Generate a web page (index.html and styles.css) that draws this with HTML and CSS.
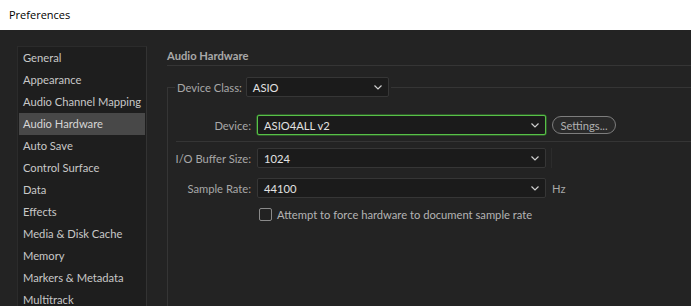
FILE: index.html
```html
<!DOCTYPE html>
<html>
<head>
<meta charset="utf-8">
<link rel="stylesheet" href="styles.css">
</head>
<body>
<div class="titlebar">Preferences</div>
<div class="main">
  <ul class="nav">
    <li>General</li>
    <li>Appearance</li>
    <li>Audio Channel Mapping</li>
    <li class="active">Audio Hardware</li>
    <li>Auto Save</li>
    <li>Control Surface</li>
    <li>Data</li>
    <li>Effects</li>
    <li>Media &amp; Disk Cache</li>
    <li>Memory</li>
    <li>Markers &amp; Metadata</li>
    <li>Multitrack</li>
  </ul>
  <section class="content">
    <h2 class="heading">Audio Hardware</h2>
    <fieldset class="group">
      <legend class="legend">
        <span class="legend-label">Device Class:</span>
        <div class="select select-class"><span>ASIO</span><svg class="chev" width="8" height="5" viewBox="0 0 8 5"><polyline points="0.5,0.5 4,4 7.5,0.5" fill="none" stroke="#cfcfcf" stroke-width="1.2"/></svg></div>
      </legend>
      <div class="row row-device">
        <span class="label">Device:</span>
        <div class="select focused"><span>ASIO4ALL v2</span><svg class="chev" width="8" height="5" viewBox="0 0 8 5"><polyline points="0.5,0.5 4,4 7.5,0.5" fill="none" stroke="#cfcfcf" stroke-width="1.2"/></svg></div>
        <button class="btn">Settings...</button>
      </div>
      <div class="sep"></div>
      <div class="row">
        <span class="label">I/O Buffer Size:</span>
        <div class="select"><span>1024</span><svg class="chev" width="8" height="5" viewBox="0 0 8 5"><polyline points="0.5,0.5 4,4 7.5,0.5" fill="none" stroke="#cfcfcf" stroke-width="1.2"/></svg></div>
        <span class="vline"></span>
      </div>
      <div class="row">
        <span class="label">Sample Rate:</span>
        <div class="select"><span>44100</span><svg class="chev" width="8" height="5" viewBox="0 0 8 5"><polyline points="0.5,0.5 4,4 7.5,0.5" fill="none" stroke="#cfcfcf" stroke-width="1.2"/></svg></div>
        <span class="unit">Hz</span>
      </div>
      <div class="row row-check">
        <span></span>
        <label class="check"><span class="box"></span><span>Attempt to force hardware to document sample rate</span></label>
      </div>
    </fieldset>
  </section>
</div>
</body>
</html>
```
FILE: styles.css
```css
* { box-sizing: border-box; }
html, body {
  margin: 0;
  padding: 0;
  width: 691px;
  height: 306px;
  overflow: hidden;
  background: #232323;
  font-family: Lato, "Open Sans", sans-serif;
  font-size: 11.2px;
}
.titlebar {
  height: 30px;
  background: #ffffff;
  color: #000;
  font-family: "Open Sans", "Noto Sans", sans-serif;
  font-size: 11px;
  line-height: 30px;
  padding-left: 9px;
}
.main {
  display: flex;
  height: 276px;
  padding-top: 16px;
  overflow: hidden;
}
.nav {
  list-style: none;
  margin: 0 0 0 17px;
  padding: 0 1px;
  width: 130px;
  flex: none;
  height: 300px;
  background: #1e1e1e;
  border: 1px solid #2b2b2b;
  border-right-color: #333;
}
.nav li {
  height: 22px;
  line-height: 22px;
  padding-left: 4px;
  color: #c8c8c8;
  white-space: nowrap;
}
.nav li.active {
  background: #484848;
  color: #d6d6d6;
}
.content {
  flex: 1;
  padding-left: 20px;
  padding-top: 2px;
}
.heading {
  margin: 0;
  font-size: 11.2px;
  font-weight: bold;
  color: #a9a9a9;
  height: 18px;
  line-height: 16px;
  border-bottom: 1px solid #353535;
  margin-bottom: 11px;
}
.group {
  margin: 0;
  padding: 0;
  border: 1px solid #353535;
  border-right: none;
  border-bottom: none;
  height: 260px;
}
.legend {
  margin-left: 7px;
  padding: 0 2px;
  display: flex;
  align-items: center;
  gap: 4px;
}
.legend-label {
  color: #a8a8a8;
}
.select {
  height: 20px;
  background: #1b1b1b;
  border: 1px solid #363636;
  border-radius: 2px;
  display: flex;
  align-items: center;
  justify-content: space-between;
  padding: 0 6px 0 6px;
  color: #e2e2e2;
}
.select-class {
  width: 143px;
}
.chev { flex: none; }
.select.focused {
  border: 1px solid #58c148;
  box-shadow: 0 0 0 0.5px #3a8a30;
}
.row {
  display: grid;
  grid-template-columns: 83px 289px auto;
  column-gap: 6px;
  align-items: center;
  height: 20px;
  margin-bottom: 10px;
}
.row-device {
  margin-top: 18px;
  margin-bottom: 0;
}
.label {
  text-align: right;
  color: #a8a8a8;
  white-space: nowrap;
}
.btn {
  justify-self: start;
  height: 18px;
  width: 64px;
  margin-left: 0;
  padding: 0;
  border: 1px solid #7d7d7d;
  border-radius: 9px;
  background: #2a2a2a;
  color: #b0b0b0;
  font-family: inherit;
  font-size: 11.2px;
}
.sep {
  height: 1px;
  background: #353535;
  margin: 6px 0 6px 8px;
}
.vline {
  width: 1px;
  height: 20px;
  background: #2c2c2c;
  margin-left: -1px;
}
.unit {
  color: #a8a8a8;
}
.row-check {
  height: 14px;
  margin-top: -1px;
}
.check {
  display: flex;
  align-items: center;
  gap: 5px;
  color: #b4b4b4;
  margin-left: 2px;
  white-space: nowrap;
  grid-column: 2 / 4;
}
.box {
  width: 13px;
  height: 13px;
  border: 1px solid #8a8a8a;
  border-radius: 2px;
  background: #222;
  flex: none;
}
```
